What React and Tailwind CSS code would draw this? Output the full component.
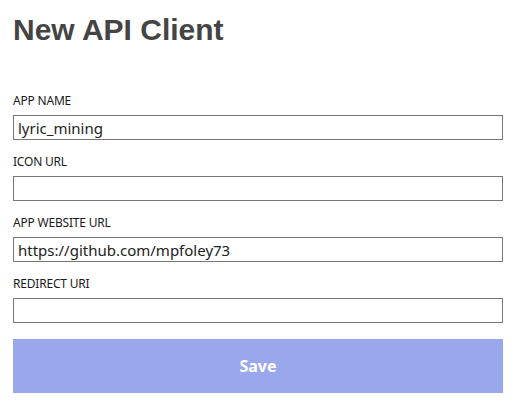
import React from "react";

const fields = [
  { label: "APP NAME", value: "lyric_mining" },
  { label: "ICON URL", value: "" },
  { label: "APP WEBSITE URL", value: "https://github.com/mpfoley73" },
  { label: "REDIRECT URI", value: "" },
];

export default function App() {
  return (
    <div className="w-[513px] h-[402px] bg-white pl-[13px] pr-[10px] overflow-hidden">
      <h1 className="mt-3 text-[30px] leading-[36px] font-bold text-[#444444] font-['Liberation_Sans',Arial,sans-serif]">
        New API Client
      </h1>
      <div className="mt-[45px] flex flex-col gap-[14px] font-['Noto_Sans',sans-serif]">
        {fields.map((f) => (
          <div key={f.label} className="flex flex-col">
            <label className="text-[12px] leading-[16px] text-[#1a1a1a] mb-[6px] tracking-[-0.2px]">
              {f.label}
            </label>
            <input
              type="text"
              defaultValue={f.value}
              className="h-[25px] w-full border border-[#767676] px-[4px] text-[15px] text-[#222] outline-none bg-white"
            />
          </div>
        ))}
      </div>
      <button className="mt-4 h-[54px] w-full bg-[#99a8ec] text-white text-[16px] font-bold font-['Noto_Sans',sans-serif]">
        Save
      </button>
    </div>
  );
}
